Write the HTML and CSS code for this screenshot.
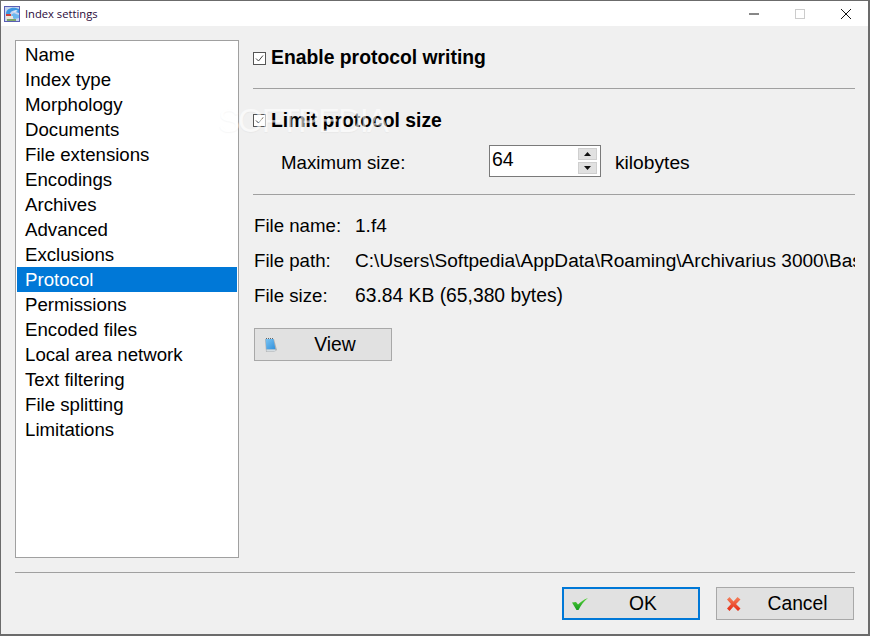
FILE: index.html
```html
<!DOCTYPE html>
<html lang="en">
<head>
<meta charset="utf-8">
<title>Index settings</title>
<link rel="stylesheet" href="styles.css">
</head>
<body>
<div class="window">
  <header class="titlebar">
    <svg class="app-icon" width="16" height="16" viewBox="0 0 16 16">
      <rect x="0.5" y="0.5" width="15" height="15" fill="#c9d4ee" stroke="#5a5fb4"/>
      <path d="M2 8C2 3 7 1 12 2L15 3V7L12 6C10 4 7 4.500 6 8Z" fill="#3c97e2"/>
      <path d="M7 9C9 7 11 7 12 8L15 9V12L10 13Z" fill="#6db7ee"/>
      <path d="M9 5L12 4L14 5L11 6Z" fill="#e8f2fb"/>
      <rect x="2" y="8" width="5" height="2" fill="#cc3f3a"/>
      <rect x="2" y="10" width="7" height="3" fill="#ece6dc"/>
      <rect x="3" y="13" width="9" height="2" fill="#7da56a"/>
    </svg>
    <span class="title">Index settings</span>
    <div class="controls">
      <svg class="ctl" width="46" height="26" viewBox="0 0 46 26"><path d="M18 13H28" stroke="#111" fill="none"/></svg>
      <svg class="ctl" width="46" height="26" viewBox="0 0 46 26"><rect x="18.500" y="8.500" width="9" height="9" stroke="#ccc" fill="none"/></svg>
      <svg class="ctl" width="46" height="26" viewBox="0 0 46 26"><path d="M18 8L28 18M28 8L18 18" stroke="#111" fill="none"/></svg>
    </div>
  </header>

  <div class="body">
    <div class="main">
      <ul class="nav">
        <li>Name</li>
        <li>Index type</li>
        <li>Morphology</li>
        <li>Documents</li>
        <li>File extensions</li>
        <li>Encodings</li>
        <li>Archives</li>
        <li>Advanced</li>
        <li>Exclusions</li>
        <li class="selected">Protocol</li>
        <li>Permissions</li>
        <li>Encoded files</li>
        <li>Local area network</li>
        <li>Text filtering</li>
        <li>File splitting</li>
        <li>Limitations</li>
      </ul>

      <section class="panel">
        <div class="check-row first">
          <svg class="check" width="13" height="13" viewBox="0 0 13 13"><rect x="0.500" y="0.500" width="12" height="12" fill="#fff" stroke="#555"/><path d="M3 6.500L5.500 9L10 3.500" stroke="#444" fill="none"/></svg>
          <span class="check-label">Enable protocol writing</span>
        </div>
        <hr class="rule rule-a">
        <div class="check-row">
          <svg class="check" width="13" height="13" viewBox="0 0 13 13"><rect x="0.500" y="0.500" width="12" height="12" fill="#fff" stroke="#555"/><path d="M3 6.500L5.500 9L10 3.500" stroke="#444" fill="none"/></svg>
          <span class="check-label">Limit protocol size</span>
        </div>
        <div class="size-row">
          <span class="size-label">Maximum size:</span>
          <div class="spin">
            <span class="spin-value">64</span>
            <div class="spin-btns">
              <span class="spin-btn"><svg width="7" height="4" viewBox="0 0 7 4"><path d="M3.500 0L7 4H0Z" fill="#111"/></svg></span>
              <span class="spin-btn"><svg width="7" height="4" viewBox="0 0 7 4"><path d="M0 0H7L3.500 4Z" fill="#111"/></svg></span>
            </div>
          </div>
          <span class="unit">kilobytes</span>
        </div>
        <hr class="rule rule-b">
        <dl class="info">
          <div class="info-row"><dt>File name:</dt><dd>1.f4</dd></div>
          <div class="info-row"><dt>File path:</dt><dd>C:\Users\Softpedia\AppData\Roaming\Archivarius 3000\Bas</dd></div>
          <div class="info-row"><dt>File size:</dt><dd class="wide">63.84 KB (65,380 bytes)</dd></div>
        </dl>
        <button class="btn btn-view" type="button">
          <svg class="btn-icon" width="16" height="18" viewBox="0 0 16 18">
            <defs>
              <linearGradient id="pageFill" x1="0" y1="0" x2="1" y2="1">
                <stop offset="0" stop-color="#7cc4f2"/>
                <stop offset="1" stop-color="#2f8fdc"/>
              </linearGradient>
            </defs>
            <path d="M2 3H11L14 14L11 16H3Z" fill="#8a8a8a" opacity="0.55"/>
            <path d="M2.500 3H10.500L12.500 13.500H3.500Z" fill="url(#pageFill)"/>
            <path d="M3 2.500H11" stroke="#666" stroke-dasharray="1 1" fill="none"/>
            <path d="M3.500 13.500H12.500V15.500H3.500Z" fill="#d5dde2"/>
          </svg>
          <span class="btn-text">View</span>
        </button>
      </section>
    </div>

    <footer class="footer">
      <hr class="rule">
      <div class="actions">
        <button class="btn btn-action default" type="button">
          <svg class="btn-icon" width="16" height="12" viewBox="0 0 16 12">
            <defs>
              <linearGradient id="tickFill" x1="0" y1="0" x2="0" y2="1">
                <stop offset="0" stop-color="#5ad23c"/>
                <stop offset="1" stop-color="#149a1e"/>
              </linearGradient>
            </defs>
            <path d="M0 4.500L4 4L6 6.500C8.500 4 11.500 1.500 16 0C12 3 9 7 6.500 12L4.500 12Z" fill="url(#tickFill)"/>
          </svg>
          <span class="btn-text">OK</span>
        </button>
        <button class="btn btn-action" type="button">
          <svg class="btn-icon" width="17" height="16" viewBox="0 0 17 16">
            <defs>
              <linearGradient id="crossFill" x1="0" y1="0" x2="0" y2="1">
                <stop offset="0" stop-color="#f4805a"/>
                <stop offset="1" stop-color="#e62a14"/>
              </linearGradient>
            </defs>
            <path d="M2 3.500L4.500 1L8.500 5.500L12.500 1L15.500 3.500L11 8L15.500 12.500L13 15L8.500 10.500L4.500 15L2 12.500L6 8Z" fill="url(#crossFill)"/>
          </svg>
          <span class="btn-text">Cancel</span>
        </button>
      </div>
    </footer>
  </div>
  <div class="watermark">SOFTPEDIA</div>
</div>
</body>
</html>
```

FILE: styles.css
```css
* { box-sizing: border-box; }
html, body { margin: 0; padding: 0; }
body {
  width: 870px;
  height: 636px;
  overflow: hidden;
  font-family: "Liberation Sans", Arial, sans-serif;
  font-size: 18.67px;
  color: #000;
}
.window {
  position: relative;
  width: 870px;
  height: 636px;
  display: flex;
  flex-direction: column;
  background: #f0f0f0;
  border: 1px solid #6b6b6b;
  border-width: 1px 2px 2px 1px;
  overflow: hidden;
}
.titlebar {
  flex: none;
  height: 25px;
  display: flex;
  align-items: center;
  background: #fff;
  padding-left: 3px;
}
.app-icon { flex: none; margin-right: 5px; }
.title {
  font-family: "Open Sans", "Liberation Sans", sans-serif;
  font-size: 11.2px;
  color: #2a0a3a;
}
.controls { margin-left: auto; display: flex; margin-right: -1px; }
.ctl { display: block; }
.body {
  flex: 1;
  display: flex;
  flex-direction: column;
  padding: 14px 13px 0 14px;
  min-height: 0;
}
.main { flex: 1; display: flex; min-height: 0; }
.nav {
  flex: none;
  width: 224px;
  height: 518px;
  margin: 0;
  padding: 1px;
  list-style: none;
  background: #fff;
  border: 1px solid #a0a0a0;
}
.nav li {
  height: 25px;
  line-height: 25px;
  padding-left: 8px;
}
.nav .selected { background: #0078d7; color: #fff; }
.panel {
  flex: 1;
  min-width: 0;
  padding-left: 15px;
  overflow: hidden;
}
.check-row {
  display: flex;
  align-items: center;
  height: 24px;
  margin-left: -1px;
}
.check-row.first { margin-top: 6px; }
.check { flex: none; margin-right: 5px; }
.check-label { font-weight: 700; font-size: 19.35px; white-space: nowrap; }
.first .check-label { margin-top: -2px; }
.rule {
  display: block;
  margin: 0;
  height: 1px;
  border: 0;
  background: #a0a0a0;
}
.rule-a { margin-top: 18px; margin-left: -1px; }
.rule-a + .check-row { margin-top: 19px; }
.size-row {
  display: flex;
  align-items: center;
  margin-top: 13px;
  padding-left: 27px;
}
.size-label { width: 208px; padding-top: 4px; }
.spin {
  width: 112px;
  height: 32px;
  display: flex;
  align-items: center;
  justify-content: space-between;
  background: #fff;
  border: 1px solid #7a7a7a;
  padding: 0 3px 0 2px;
}
.spin-value { margin-top: -4px; font-size: 19.5px; }
.spin-btns { display: flex; flex-direction: column; gap: 2px; }
.spin-btn {
  width: 19px;
  height: 12px;
  display: flex;
  align-items: center;
  justify-content: center;
  background: #e1e1e1;
  border: 1px solid #cfcfcf;
}
.spin-btn svg { display: block; }
.unit { margin-left: 14px; padding-top: 4px; font-size: 19.2px; }
.rule-b { margin-top: 17px; margin-left: -1px; }
.info { margin: 13px 0 0; }
.info-row { display: flex; height: 35px; align-items: center; white-space: nowrap; }
.info dt { width: 101px; flex: none; }
.info dd { margin: 0; font-size: 19.08px; }
.info dd.wide { font-size: 19.3px; }
.btn {
  display: flex;
  align-items: center;
  position: relative;
  padding: 0;
  font-family: inherit;
  font-size: 19.3px;
  color: #000;
  background: #e1e1e1;
  border: 1px solid #a8a8a8;
}
.btn-view { width: 138px; height: 33px; margin-top: 15px; }
.btn-icon { flex: none; margin-left: 8px; }
.btn-text { flex: 1; text-align: center; }
.footer { flex: none; height: 62px; }
.actions {
  display: flex;
  justify-content: flex-end;
  gap: 16px;
  margin-top: 14px;
  padding-right: 1px;
}
.btn-action { width: 138px; height: 33px; }
.default { border: 2px solid #0078d7; }
.watermark {
  position: absolute;
  left: 217px;
  top: 101px;
  font-size: 33px;
  letter-spacing: -2px;
  color: #fff;
  opacity: 0.6;
  text-shadow: 0 1px 1px rgba(0, 0, 0, 0.05);
  pointer-events: none;
}
```
